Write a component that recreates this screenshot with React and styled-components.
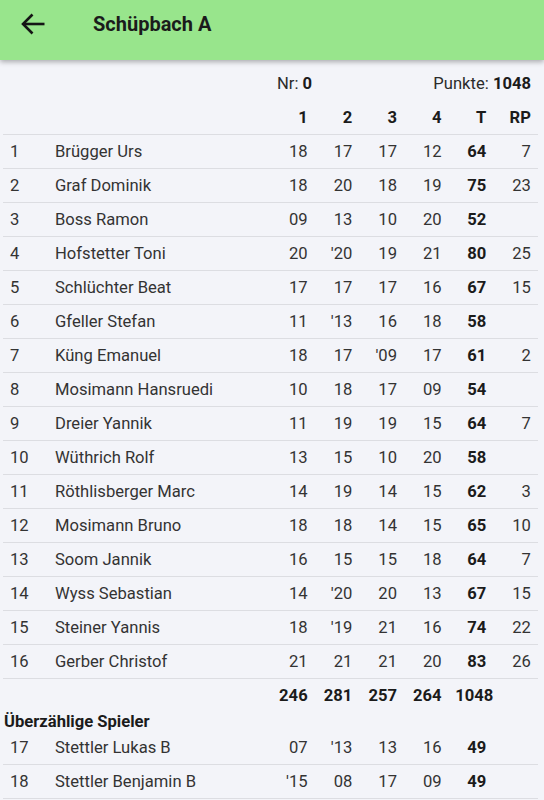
import React from "react";
import styled, { createGlobalStyle } from "styled-components";

const GlobalStyle = createGlobalStyle`
  html, body {
    margin: 0;
    padding: 0;
    background: #f3f4f9;
    font-family: Roboto, "Liberation Sans", sans-serif;
    color: #2b2b2b;
  }
`;

const Page = styled.div`
  width: 544px;
  min-height: 800px;
  background: #f3f4f9;
`;

const AppBar = styled.header`
  height: 60px;
  background: #98e58c;
  display: flex;
  align-items: center;
  box-shadow: 0 2px 5px rgba(0, 0, 0, 0.3);
  position: relative;
  z-index: 1;
`;

const BackButton = styled.button`
  border: 0;
  background: none;
  padding: 0;
  margin: -13px 0 0 20px;
  width: 28px;
  height: 24px;
  display: flex;
  align-items: center;
`;

const Title = styled.h1`
  margin: -13px 0 0 45px;
  font-size: 20px;
  font-weight: 700;
  color: #1b1b1b;
`;

const Content = styled.main`
  padding: 6px 6px 0 3px;
`;

const InfoRow = styled.div`
  height: 34px;
  display: flex;
  align-items: center;
  justify-content: space-between;
  padding: 0 7px 0 274px;
  font-size: 16.6px;
  color: #2b2b2b;
  b { font-weight: 700; color: #1b1b1b; }
`;

const Table = styled.div`
  width: 535px;
`;

const Row = styled.div`
  display: grid;
  grid-template-columns: 52px 215px repeat(6, 44.67px);
  height: 34px;
  align-items: center;
  box-sizing: border-box;
  border-top: ${(p) => (p.$top ? "1px solid #dcdde2" : "none")};
  border-bottom: ${(p) => (p.$bottom ? "1px solid #dcdde2" : "none")};
  font-size: 16.6px;
`;

const Cell = styled.span`
  text-align: ${(p) => (p.$left ? "left" : "right")};
  padding: ${(p) => (p.$left ? "0 0 0 7px" : p.$wide ? "0" : "0 7px 0 0")};
  font-weight: ${(p) => (p.$bold ? 700 : 400)};
  color: ${(p) => (p.$bold ? "#1b1b1b" : "#333")};
  white-space: nowrap;
`;

const NameCell = styled.span`
  color: #333;
  white-space: nowrap;
`;

const SectionTitle = styled.div`
  height: 19px;
  line-height: 19px;
  padding-left: 1px;
  font-size: 16.6px;
  font-weight: 700;
  color: #1b1b1b;
`;

const players = [
  [1, "Brügger Urs", "18", "17", "17", "12", "64", "7"],
  [2, "Graf Dominik", "18", "20", "18", "19", "75", "23"],
  [3, "Boss Ramon", "09", "13", "10", "20", "52", ""],
  [4, "Hofstetter Toni", "20", "'20", "19", "21", "80", "25"],
  [5, "Schlüchter Beat", "17", "17", "17", "16", "67", "15"],
  [6, "Gfeller Stefan", "11", "'13", "16", "18", "58", ""],
  [7, "Küng Emanuel", "18", "17", "'09", "17", "61", "2"],
  [8, "Mosimann Hansruedi", "10", "18", "17", "09", "54", ""],
  [9, "Dreier Yannik", "11", "19", "19", "15", "64", "7"],
  [10, "Wüthrich Rolf", "13", "15", "10", "20", "58", ""],
  [11, "Röthlisberger Marc", "14", "19", "14", "15", "62", "3"],
  [12, "Mosimann Bruno", "18", "18", "14", "15", "65", "10"],
  [13, "Soom Jannik", "16", "15", "15", "18", "64", "7"],
  [14, "Wyss Sebastian", "14", "'20", "20", "13", "67", "15"],
  [15, "Steiner Yannis", "18", "'19", "21", "16", "74", "22"],
  [16, "Gerber Christof", "21", "21", "21", "20", "83", "26"],
];

const extras = [
  [17, "Stettler Lukas B", "07", "'13", "13", "16", "49", ""],
  [18, "Stettler Benjamin B", "'15", "08", "17", "09", "49", ""],
];

function PlayerRow({ data, top, bottom }) {
  const [nr, name, a, b, c, d, t, rp] = data;
  return (
    <Row $top={top} $bottom={bottom}>
      <Cell $left>{nr}</Cell>
      <NameCell>{name}</NameCell>
      <Cell>{a}</Cell>
      <Cell>{b}</Cell>
      <Cell>{c}</Cell>
      <Cell>{d}</Cell>
      <Cell $bold>{t}</Cell>
      <Cell>{rp}</Cell>
    </Row>
  );
}

export default function App() {
  return (
    <Page>
      <GlobalStyle />
      <AppBar>
        <BackButton aria-label="Zurück">
          <svg width="26" height="22" viewBox="0 0 26 22" fill="none">
            <path d="M24.5 11H3" stroke="#151515" strokeWidth="2.6" />
            <path d="M12.5 1.5 3 11l9.5 9.5" stroke="#151515" strokeWidth="2.6" />
          </svg>
        </BackButton>
        <Title>Schüpbach A</Title>
      </AppBar>
      <Content>
        <Table>
          <InfoRow>
            <span>Nr: <b>0</b></span>
            <span>Punkte: <b>1048</b></span>
          </InfoRow>
          <Row>
            <span />
            <span />
            <Cell $bold>1</Cell>
            <Cell $bold>2</Cell>
            <Cell $bold>3</Cell>
            <Cell $bold>4</Cell>
            <Cell $bold>T</Cell>
            <Cell $bold>RP</Cell>
          </Row>
          {players.map((p) => (
            <PlayerRow key={p[0]} data={p} top />
          ))}
          <Row $top>
            <span />
            <span />
            <Cell $bold>246</Cell>
            <Cell $bold>281</Cell>
            <Cell $bold>257</Cell>
            <Cell $bold>264</Cell>
            <Cell $bold $wide>1048</Cell>
            <span />
          </Row>
          <SectionTitle>Überzählige Spieler</SectionTitle>
          {extras.map((p) => (
            <PlayerRow key={p[0]} data={p} bottom />
          ))}
        </Table>
      </Content>
    </Page>
  );
}
